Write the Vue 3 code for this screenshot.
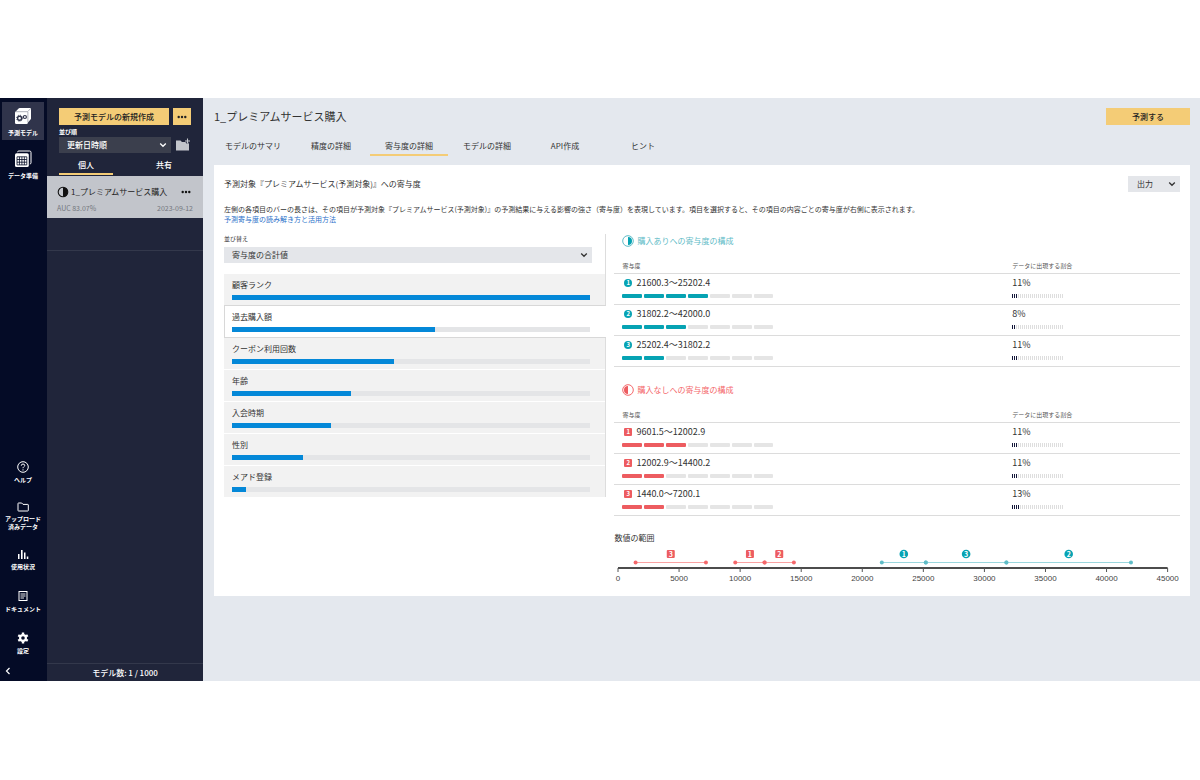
<script setup>
import { ref } from 'vue'

const tabs = ['モデルのサマリ', '精度の詳細', '寄与度の詳細', 'モデルの詳細', 'API作成', 'ヒント']
const activeTab = ref(2)

const features = [
  { name: '顧客ランク', share: 100 },
  { name: '過去購入額', share: 56.7 },
  { name: 'クーポン利用回数', share: 45.2 },
  { name: '年齢', share: 33.3 },
  { name: '入会時期', share: 27.7 },
  { name: '性別', share: 19.7 },
  { name: 'メアド登録', share: 4 },
]
const selected = ref(1)

const groups = [
  {
    kind: 'pos',
    title: '購入ありへの寄与度の構成',
    rows: [
      { range: '21600.3～25202.4', level: 4, percent: '11%', ticks: 3 },
      { range: '31802.2～42000.0', level: 3, percent: '8%', ticks: 2 },
      { range: '25202.4～31802.2', level: 2, percent: '11%', ticks: 3 },
    ],
  },
  {
    kind: 'neg',
    title: '購入なしへの寄与度の構成',
    rows: [
      { range: '9601.5～12002.9', level: 3, percent: '11%', ticks: 3 },
      { range: '12002.9～14400.2', level: 2, percent: '11%', ticks: 3 },
      { range: '1440.0～7200.1', level: 2, percent: '13%', ticks: 4 },
    ],
  },
]

const axisMax = 45000
const axisTicks = [0, 5000, 10000, 15000, 20000, 25000, 30000, 35000, 40000, 45000]
const spans = [
  { kind: 'neg', n: 3, from: 1440, to: 7200.1 },
  { kind: 'neg', n: 1, from: 9601.5, to: 12002.9 },
  { kind: 'neg', n: 2, from: 12002.9, to: 14400.2 },
  { kind: 'pos', n: 1, from: 21600.3, to: 25202.4 },
  { kind: 'pos', n: 3, from: 25202.4, to: 31802.2 },
  { kind: 'pos', n: 2, from: 31802.2, to: 42000 },
]
const at = (v) => (v / axisMax) * 100 + '%'
const mid = (s) => at((s.from + s.to) / 2)
</script>

<template>
  <div class="app">
    <nav class="rail">
      <button class="rail-item active">
        <svg width="18" height="18" viewBox="0 0 18 18">
          <path d="M1.200 5 4.600 1.500q.4-.4 1-.4h10.400q1 0 1 1v9.400q0 .5-.3.800L13.600 16z" fill="#fff" />
          <rect x="1" y="4.800" width="12.800" height="12.200" rx="1.200" fill="#fff" />
          <path d="M2 4.700h11.600l3-3M13.900 5v10.500" fill="none" stroke="#30344b" stroke-width=".4" />
          <circle cx="5.600" cy="11.200" r="2" fill="none" stroke="#30344b" stroke-width="1.400" />
          <circle cx="5.600" cy="11.200" r="3" fill="none" stroke="#30344b" stroke-width=".9" stroke-dasharray="1.180 1.180" />
          <circle cx="10.900" cy="10" r="1.500" fill="none" stroke="#30344b" stroke-width="1.200" />
        </svg>
        <span>予測モデル</span>
      </button>
      <button class="rail-item">
        <svg width="18" height="18" viewBox="0 0 18 18">
          <path d="M3.600 2.200q0-1.200 1.200-1.200h10.800q1.400 0 1.400 1.400v10.400q0 1.200-1.200 1.200" fill="none" stroke="#fff" stroke-width="1" />
          <rect x="1" y="3.200" width="13.800" height="13.800" rx="1.600" fill="#fff" />
          <path d="M3 6.800h9.800v8.100H3zM3 9.500h9.800M3 12.200h9.800M5.450 6.800v8.100M7.900 6.800v8.100M10.350 6.800v8.100" fill="none" stroke="#040b26" stroke-width=".8" />
        </svg>
        <span>データ準備</span>
      </button>
      <div class="rail-bottom">
        <button class="rail-item">
          <svg width="14" height="14" viewBox="0 0 14 14" fill="none" stroke="#fff">
            <circle cx="7" cy="7" r="5.300" />
            <path d="M5.300 5.700q0-1.700 1.700-1.700t1.700 1.500c0 1.200-1.700 1.300-1.700 2.700M7 9.300v1.200" />
          </svg>
          <span>ヘルプ</span>
        </button>
        <button class="rail-item tall">
          <svg width="14" height="14" viewBox="0 0 14 14" fill="none" stroke="#fff">
            <path d="M2 3.500q0-.5.500-.5h3.200l1.300 1.400h4.800q.5 0 .5.500v5.600q0 .5-.5.500H2.500q-.5 0-.5-.5z" />
          </svg>
          <span>アップロード<br />済みデータ</span>
        </button>
        <button class="rail-item">
          <svg width="14" height="14" viewBox="0 0 14 14" fill="#fff">
            <path d="M2 7h1.500v5H2zM5 3h1.600v9H5zM8 5.500h1.500V12H8zM10.800 9.500h1.500V12h-1.500z" />
          </svg>
          <span>使用状況</span>
        </button>
        <button class="rail-item">
          <svg width="14" height="14" viewBox="0 0 14 14" fill="none" stroke="#fff">
            <rect x="3" y="2.500" width="8" height="9" />
            <path d="M4.500 5h5M4.500 7h5M4.500 9h3.500" stroke-width=".9" />
          </svg>
          <span>ドキュメント</span>
        </button>
        <button class="rail-item">
          <svg width="14" height="14" viewBox="0 0 14 14">
            <circle cx="7" cy="7" r="2.900" fill="none" stroke="#fff" stroke-width="2.200" />
            <path d="M7 1.500v2M7 10.500v2M2.240 4.250l1.730 1M10.030 8.750l1.730 1M2.240 9.750l1.730-1M10.030 5.250l1.730-1" stroke="#fff" stroke-width="2.400" />
          </svg>
          <span>設定</span>
        </button>
      </div>
      <button class="collapse" aria-label="メニューを閉じる">
        <svg width="8" height="8" viewBox="0 0 8 8"><path d="M5.500 1 2.500 4l3 3" fill="none" stroke="#fff" stroke-width="1.200" /></svg>
      </button>
    </nav>

    <aside class="side">
      <div class="side-top">
        <div class="row">
          <button class="gold grow">予測モデルの新規作成</button>
          <button class="gold more" aria-label="その他">
            <svg width="10" height="4" viewBox="0 0 10 4" fill="#222"><circle cx="1.700" cy="2" r="1.200" /><circle cx="5" cy="2" r="1.200" /><circle cx="8.300" cy="2" r="1.200" /></svg>
          </button>
        </div>
        <label class="tiny side-label" for="order">並び順</label>
        <div class="row">
          <div class="select dark">
            <select id="order"><option>更新日時順</option></select>
            <svg class="chev" width="8" height="8" viewBox="0 0 8 8"><path d="M1.200 2.500 4 5.300l2.800-2.800" /></svg>
          </div>
          <button class="folder" aria-label="フォルダ作成">
            <svg width="16" height="14" viewBox="0 0 16 14">
              <path d="M1 2.500h4.500l1.500 1.500h7v8.500H1z" fill="#c3c6cc" />
              <path d="M12.500.5v5M10 3h5" stroke="#20253a" stroke-width="2.600" />
              <path d="M12.500.5v5M10 3h5" stroke="#c3c6cc" stroke-width="1.100" />
            </svg>
          </button>
        </div>
      </div>
      <div class="side-tabs">
        <button class="on">個人</button>
        <button>共有</button>
      </div>
      <div class="model">
        <div class="model-name">
          <svg width="12" height="12" viewBox="0 0 12 12"><circle cx="6" cy="6" r="4.800" fill="none" stroke="#111" stroke-width="1.100" /><path d="M6 1.200a4.800 4.800 0 0 1 0 9.600z" fill="#111" /></svg>
          <span>1_プレミアムサービス購入</span>
          <button aria-label="メニュー">
            <svg width="10" height="4" viewBox="0 0 10 4" fill="#111"><circle cx="1.700" cy="2" r="1.200" /><circle cx="5" cy="2" r="1.200" /><circle cx="8.300" cy="2" r="1.200" /></svg>
          </button>
        </div>
        <div class="model-meta"><span>AUC 83.07%</span><span>2023-09-12</span></div>
      </div>
      <div class="side-gap"></div>
      <footer class="side-foot">モデル数: 1 / 1000</footer>
    </aside>

    <main class="main">
      <header class="head">
        <h1>1_プレミアムサービス購入</h1>
        <button class="gold predict">予測する</button>
      </header>
      <nav class="tabs">
        <button v-for="(t, i) in tabs" :key="t" :class="{ on: i === activeTab }" @click="activeTab = i">{{ t }}</button>
      </nav>

      <section class="card">
        <div class="card-head">
          <h2>予測対象『プレミアムサービス(予測対象)』への寄与度</h2>
          <button class="export">
            出力
            <svg class="chev-d" width="8" height="8" viewBox="0 0 8 8"><path d="M1.200 2.500 4 5.300l2.800-2.800" /></svg>
          </button>
        </div>
        <p class="desc">
          左側の各項目のバーの長さは、その項目が予測対象『プレミアムサービス(予測対象)』の予測結果に与える影響の強さ（寄与度）を表現しています。項目を選択すると、その項目の内容ごとの寄与度が右側に表示されます。<br />
          <a href="#">予測寄与度の読み解き方と活用方法</a>
        </p>

        <div class="cols">
          <div class="left">
            <label class="tiny" for="sort">並び替え</label>
            <div class="select light">
              <select id="sort"><option>寄与度の合計値</option></select>
              <svg class="chev" width="8" height="8" viewBox="0 0 8 8"><path d="M1.200 2.500 4 5.300l2.800-2.800" /></svg>
            </div>
            <div class="features">
              <button v-for="(f, i) in features" :key="f.name" class="feature" :class="{ on: i === selected }" @click="selected = i">
                <span>{{ f.name }}</span>
                <span class="bar"><span class="fill" :style="{ width: f.share + '%' }"></span></span>
              </button>
            </div>
          </div>

          <div class="right">
            <section v-for="g in groups" :key="g.kind" class="group" :class="g.kind">
              <h3>
                <svg width="12" height="12" viewBox="0 0 12 12">
                  <circle cx="6" cy="6" r="5.300" fill="none" stroke="currentColor" stroke-width="1" />
                  <path v-if="g.kind === 'pos'" class="half" d="M6 2a4 4 0 0 1 0 8z" />
                  <path v-else class="half" d="M6 2a4 4 0 0 0 0 8z" />
                </svg>
                {{ g.title }}
              </h3>
              <table>
                <thead>
                  <tr><th>寄与度</th><th class="ratio">データに出現する割合</th></tr>
                </thead>
                <tbody>
                  <tr v-for="(r, i) in g.rows" :key="r.range">
                    <td>
                      <div class="value"><span class="badge">{{ i + 1 }}</span>{{ r.range }}</div>
                      <div class="segs"><i v-for="k in 7" :key="k" :class="{ full: k <= r.level }"></i></div>
                    </td>
                    <td>
                      <div class="value pct">{{ r.percent }}</div>
                      <div class="ticks"><i v-for="k in 26" :key="k" :class="{ full: k <= r.ticks }"></i></div>
                    </td>
                  </tr>
                </tbody>
              </table>
            </section>

            <h4>数値の範囲</h4>
            <div class="axis">
              <svg width="100%" height="36">
                <g v-for="s in spans" :key="s.kind + s.n" :class="s.kind">
                  <line class="span" :x1="at(s.from)" :x2="at(s.to)" y1="14.500" y2="14.500" />
                  <circle class="dot" :cx="at(s.from)" cy="14.500" r="2" />
                  <circle class="dot" :cx="at(s.to)" cy="14.500" r="2" />
                  <svg :x="mid(s)" y="6" overflow="visible">
                    <circle v-if="s.kind === 'pos'" class="mark" r="4.300" />
                    <rect v-else class="mark" x="-4" y="-4" width="8" height="8" rx="1" />
                    <text class="mark-n" y="2.500">{{ s.n }}</text>
                  </svg>
                </g>
                <line x1="0" x2="100%" y1="20" y2="20" stroke="#111" stroke-width="1.300" />
                <g v-for="t in axisTicks" :key="t">
                  <line :x1="at(t)" :x2="at(t)" y1="20" y2="24" stroke="#555" stroke-width="1" />
                  <text class="axis-n" :x="at(t)" y="33">{{ t }}</text>
                </g>
              </svg>
            </div>
          </div>
        </div>
      </section>
    </main>
  </div>
</template>

<style>
body {
  background: #fff;
}
</style>

<style scoped>
.app {
  display: flex;
  min-height: calc(100vh - 197px);
  margin: 98px 0 99px;
  font-family: "Noto Sans CJK JP", sans-serif;
  font-size: 8px;
  line-height: 12px;
  color: #333;
}
.app *, .app {
  box-sizing: border-box;
}
button, select {
  font: inherit;
  color: inherit;
  border: 0;
  background: none;
  padding: 0;
  margin: 0;
  border-radius: 0;
}
h1, h2, h3, h4, p {
  margin: 0;
  font-weight: 400;
}
svg {
  display: block;
  flex: none;
}
.tiny {
  display: block;
  font-size: 6px;
  line-height: 10px;
}

.rail {
  flex: none;
  width: 47px;
  background: #040b26;
  color: #fff;
  display: flex;
  flex-direction: column;
  padding: 4px 3px 4px 2px;
}
.rail-item {
  display: flex;
  flex-direction: column;
  align-items: center;
  gap: 4px;
  width: 100%;
  padding: 5px 0 3px;
  font-size: 6px;
  line-height: 8px;
  font-weight: 700;
  white-space: nowrap;
}
.rail-item.active {
  background: #30344b;
  margin-bottom: 5px;
}
.rail-bottom {
  margin-top: auto;
  display: flex;
  flex-direction: column;
  gap: 10px;
}
.rail-bottom .rail-item {
  gap: 2px;
}
.rail-bottom .tall {
  gap: 1px;
  padding: 3px 0 1px;
}
.collapse {
  width: 12px;
  margin-top: 7px;
  padding: 2px;
}

.side {
  flex: none;
  width: 156px;
  background: #20253a;
  color: #fff;
  display: flex;
  flex-direction: column;
}
.side-top {
  padding: 10px 12px 0;
}
.row {
  display: flex;
  gap: 4px;
  align-items: center;
}
.gold {
  background: #f4cc76;
  color: #222;
  height: 17px;
  font-weight: 500;
}
.grow {
  flex: 1;
}
.more {
  width: 18px;
  display: grid;
  place-items: center;
}
.side-label {
  padding-top: 2px;
  font-weight: 700;
}
.select {
  position: relative;
  flex: 1;
}
.select select {
  appearance: none;
  display: block;
  width: 100%;
  height: 16px;
  padding: 0 20px 0 8px;
}
.dark select {
  background: #3b3f4d;
  font-weight: 500;
}
.light select {
  background: #e4e6ea;
}
.chev {
  position: absolute;
  right: 4px;
  top: 4px;
  pointer-events: none;
}
.chev path, .chev-d path {
  fill: none;
  stroke: currentColor;
  stroke-width: 1.3;
}
.side-tabs {
  display: grid;
  grid-template-columns: 1fr 1fr;
  gap: 24px;
  padding: 4px 12px 1px;
}
.side-tabs button {
  height: 18px;
  font-weight: 500;
  border-bottom: 2px solid transparent;
}
.side-tabs .on {
  border-color: #f4cc76;
}
.model {
  height: 42px;
  background: #c2c5cb;
  color: #222;
  padding: 10px 10px 0;
}
.model-name {
  display: flex;
  align-items: center;
  gap: 2px;
}
.model-name button {
  margin-left: auto;
  margin-right: 2px;
}
.model-meta {
  display: flex;
  justify-content: space-between;
  font-size: 7px;
  line-height: 10px;
  color: #74777e;
  padding-top: 5px;
}
.side-gap {
  height: 33px;
  border-bottom: 1px solid #33384b;
}
.side-foot {
  margin-top: auto;
  height: 18px;
  border-top: 1px solid #33384b;
  text-align: center;
  line-height: 18px;
  font-weight: 500;
}

.main {
  flex: 1;
  min-width: 0;
  background: #e4e8ee;
  padding: 10px 10px 0 11px;
}
.head {
  display: flex;
  justify-content: space-between;
  align-items: center;
}
h1 {
  font-size: 11px;
  line-height: 17px;
}
.predict {
  width: 84px;
}
.tabs {
  display: flex;
  padding-top: 12px;
  margin-bottom: 9px;
}
.tabs button {
  width: 78px;
  height: 19px;
  border-bottom: 2px solid transparent;
}
.tabs .on {
  border-color: #f4cc76;
}

.card {
  background: #fff;
  padding: 11px 10px 12px;
}
.card-head {
  display: flex;
  justify-content: space-between;
  align-items: center;
}
h2, h3, h4 {
  font-size: 8px;
  line-height: 12px;
}
.export {
  display: flex;
  align-items: center;
  justify-content: space-between;
  width: 52px;
  height: 16px;
  padding: 0 4px 0 9px;
  background: #e4e6ea;
}
.desc {
  margin-top: 12px;
  font-size: 7px;
  line-height: 10px;
}
.desc a {
  color: #2a6fc9;
  text-decoration: none;
}
.cols {
  display: grid;
  grid-template-columns: 2fr 3fr;
  align-items: start;
  margin-top: 10px;
}
.left {
  border-right: 1px solid #ddd;
}
.left .select {
  margin: 3px 13px 11px 0;
}
.features {
  display: flex;
  flex-direction: column;
  gap: 1px;
}
.feature {
  display: flex;
  flex-direction: column;
  height: 31px;
  padding: 5px 15px 0 8px;
  gap: 4px;
  background: #f2f2f2;
  text-align: left;
}
.feature.on {
  background: #fff;
  margin-right: -1px;
  padding-right: 16px;
  box-shadow: inset 1px 0 #d8d8d8, 0 -1px #d8d8d8, 0 1px #d8d8d8;
}
.bar {
  display: block;
  width: 100%;
  height: 5px;
  background: #e4e5e7;
}
.fill {
  display: block;
  height: 100%;
  background: #0488d8;
}

.right {
  padding-left: 8px;
}
.pos {
  --main: #06a3b3;
  --soft: #5fbcc7;
  --line: #9bd7de;
}
.neg {
  --main: #ed5c60;
  --soft: #f4686b;
  --line: #fba3a3;
}
.group {
  margin-bottom: 16px;
}
h3 {
  display: flex;
  align-items: center;
  gap: 3px;
  height: 14px;
  padding-left: 8px;
  color: var(--soft);
}
.half {
  fill: var(--main);
}
table {
  width: 100%;
  margin-top: 10px;
  border-spacing: 0;
  table-layout: fixed;
}
th, td {
  padding: 0 0 0 2px;
  border-bottom: 1px solid #dcdcdc;
  text-align: left;
  font-weight: 400;
}
th {
  height: 16px;
  font-size: 6px;
  line-height: 10px;
  color: #555;
}
th.ratio {
  width: 30%;
}
th:first-child, td:first-child {
  padding-left: 8px;
}
td {
  height: 31px;
  vertical-align: top;
}
.value {
  display: flex;
  align-items: center;
  gap: 4px;
  height: 12px;
  margin: 3px 0 5px 2px;
  font-size: 9px;
}
.pct {
  margin-left: 0;
}
.badge {
  width: 8px;
  height: 8px;
  background: var(--main);
  color: #fff;
  font-size: 6px;
  line-height: 8px;
  font-weight: 700;
  text-align: center;
}
.pos .badge {
  border-radius: 50%;
}
.neg .badge {
  border-radius: 1px;
}
.segs {
  display: flex;
  gap: 2px;
  width: 151px;
}
.segs i {
  flex: 1;
  height: 4px;
  border-radius: 1px;
  background: #e5e5e5;
}
.segs .full {
  background: var(--main);
}
.ticks {
  display: flex;
  gap: 1px;
}
.ticks i {
  width: 1px;
  height: 4px;
  background: #dedede;
}
.ticks .full {
  background: #14183a;
}
.axis {
  margin: 4px 12px 0 4px;
}
.axis svg {
  overflow: visible;
}
.span {
  stroke: var(--line);
}
.dot {
  fill: var(--soft);
}
.mark {
  fill: var(--main);
}
.mark-n {
  fill: #fff;
  font-size: 7px;
  font-weight: 700;
  text-anchor: middle;
}
.axis-n {
  fill: #444;
  font-family: "Liberation Sans", sans-serif;
  font-size: 8px;
  text-anchor: middle;
}
</style>
